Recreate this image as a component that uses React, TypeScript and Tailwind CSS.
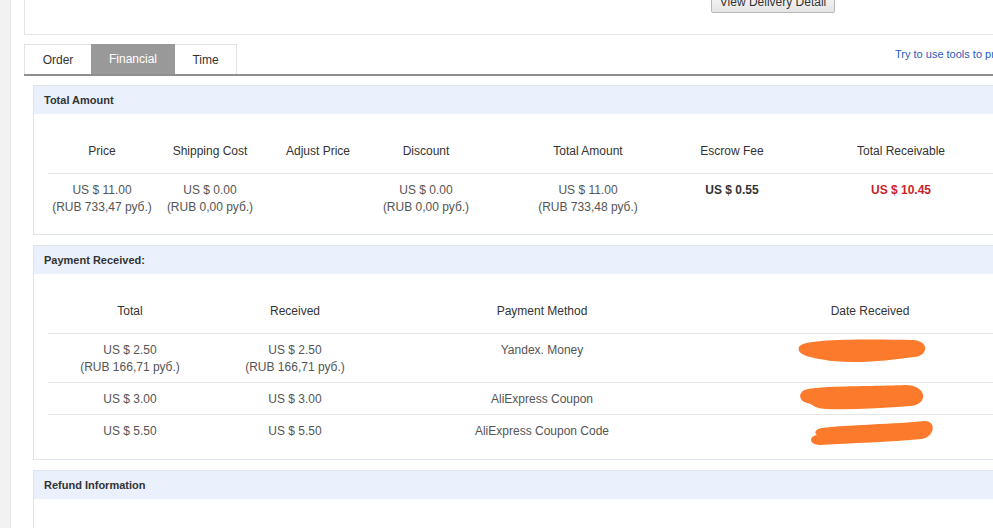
import React from "react";

const totals = [
  { label: "Price", w: "w-[108px]", usd: "US $ 11.00", rub: "(RUB 733,47 руб.)" },
  { label: "Shipping Cost", w: "w-[108px]", usd: "US $ 0.00", rub: "(RUB 0,00 руб.)" },
  { label: "Adjust Price", w: "w-[108px]", usd: "", rub: "" },
  { label: "Discount", w: "w-[108px]", usd: "US $ 0.00", rub: "(RUB 0,00 руб.)" },
  { label: "Total Amount", w: "w-[216px]", usd: "US $ 11.00", rub: "(RUB 733,48 руб.)" },
];

const payments = [
  { total: "US $ 2.50", rub: "(RUB 166,71 руб.)", method: "Yandex. Money" },
  { total: "US $ 3.00", rub: "", method: "AliExpress Coupon" },
  { total: "US $ 5.50", rub: "", method: "AliExpress Coupon Code" },
];

function Section({ title, children }: { title: string; children?: React.ReactNode }) {
  return (
    <div className="border border-[#dde4ec] bg-white">
      <div className="flex h-[28px] items-center bg-[#eaf1fc] px-[10px] text-[11px] font-bold text-[#333]">
        {title}
      </div>
      {children}
    </div>
  );
}

export default function App() {
  return (
    <div className="flex h-[528px] w-[993px] overflow-hidden bg-white font-['Liberation_Sans',Arial,sans-serif] text-[12px] text-[#333]">
      <div className="w-[11px] shrink-0 border-r border-[#e6e6e6] bg-[#f2f2f2]" />

      <div className="ml-[13px] flex w-[1100px] shrink-0 flex-col">
        {/* top info box, cut off by the window */}
        <div className="flex h-[35px] flex-col justify-end border-x border-b border-[#e1e4e8] pb-[21px] pl-[686px]">
          <button className="h-[23px] w-[124px] shrink-0 rounded-[2px] border border-[#b8b8b8] bg-gradient-to-b from-[#fbfbfb] to-[#e4e4e4] text-[12px] text-[#333]">
            View Delivery Detail
          </button>
        </div>

        {/* tabs */}
        <div className="mt-[9px] flex h-[32px] border-b-2 border-[#8f8f8f]">
          <div className="flex h-[30px] w-[67px] items-center justify-center border-l border-t border-[#e3e3e3] text-[#333]">
            Order
          </div>
          <div className="flex h-[30px] w-[84px] items-center justify-center bg-[#999] text-white">
            Financial
          </div>
          <div className="flex h-[30px] w-[62px] items-center justify-center border-r border-t border-[#e3e3e3] text-[#333]">
            Time
          </div>
          <a className="ml-[658px] whitespace-nowrap pt-[4px] text-[11px] leading-[13px] text-[#1f5cbf]">
            Try to use tools to protect your rights
          </a>
        </div>

        <div className="ml-[9px] mt-[9px] flex flex-col gap-[10px]">
          <Section title="Total Amount">
            <div className="px-[14px] pb-[12px] pt-[29px]">
              <table className="w-[986px] table-fixed border-collapse text-center leading-[17px]">
                <thead>
                  <tr className="border-b border-[#e5e5e5]">
                    {totals.map((c) => (
                      <th key={c.label} className={`${c.w} pb-[13px] font-normal text-[#333]`}>
                        {c.label}
                      </th>
                    ))}
                    <th className="w-[72px] pb-[13px] font-normal text-[#333]">Escrow Fee</th>
                    <th className="w-[266px] pb-[13px] font-normal text-[#333]">Total Receivable</th>
                  </tr>
                </thead>
                <tbody>
                  <tr className="align-top">
                    {totals.map((c) => (
                      <td key={c.label} className="pb-[6px] pt-[8px] text-[#555]">
                        <div>{c.usd}</div>
                        <div>{c.rub}</div>
                      </td>
                    ))}
                    <td className="pb-[6px] pt-[8px] font-bold text-[#333]">US $ 0.55</td>
                    <td className="pb-[6px] pt-[8px] font-bold text-[#c8232c]">US $ 10.45</td>
                  </tr>
                </tbody>
              </table>
            </div>
          </Section>

          <Section title="Payment Received:">
            <div className="px-[14px] pb-[13px] pt-[29px]">
              <div className="relative">
                <table className="w-[986px] table-fixed border-collapse text-center leading-[17px]">
                  <thead>
                    <tr className="border-b border-[#e5e5e5]">
                      <th className="w-[164px] pb-[13px] font-normal">Total</th>
                      <th className="w-[166px] pb-[13px] font-normal">Received</th>
                      <th className="w-[328px] pb-[13px] font-normal">Payment Method</th>
                      <th className="w-[328px] pb-[13px] font-normal">Date Received</th>
                    </tr>
                  </thead>
                  <tbody>
                    {payments.map((p, i) => (
                      <tr key={i} className="border-b border-[#e5e5e5] align-top last:border-0">
                        <td className="pb-[6px] pt-[8px] text-[#555]">
                          <div>{p.total}</div>
                          {p.rub && <div>{p.rub}</div>}
                        </td>
                        <td className="pb-[6px] pt-[8px] text-[#555]">
                          <div>{p.total}</div>
                          {p.rub && <div>{p.rub}</div>}
                        </td>
                        <td className="pb-[6px] pt-[8px] text-[#555]">{p.method}</td>
                        <td className="pb-[6px] pt-[8px]" />
                      </tr>
                    ))}
                  </tbody>
                </table>
                {/* hand-drawn redaction marks over the dates */}
                <svg
                  className="pointer-events-none absolute left-0 top-0"
                  width="1000"
                  height="200"
                  viewBox="48 303 1000 200"
                >
                  <path
                    fill="#fb7a2c"
                    d="M799,347 C802,339 860,339 913,340 C929,341 929,355 915,357 C890,360 862,364 832,361 C811,358 796,355 799,347 Z"
                  />
                  <path
                    fill="#fb7a2c"
                    d="M802,392 C805,385 862,387 905,385 C927,385 929,404 911,406 C882,408 852,410 826,409 C812,408 814,404 807,403 C799,401 799,394 802,392 Z"
                  />
                  <path
                    fill="#fb7a2c"
                    d="M822,428 C842,425 900,424 924,421 C936,420 936,436 922,439 C890,442 850,443 821,445 C808,445 809,436 817,435 C814,433 815,429 822,428 Z"
                  />
                </svg>
              </div>
            </div>
          </Section>

          <Section title="Refund Information">
            <div className="h-[60px]" />
          </Section>
        </div>
      </div>
    </div>
  );
}
